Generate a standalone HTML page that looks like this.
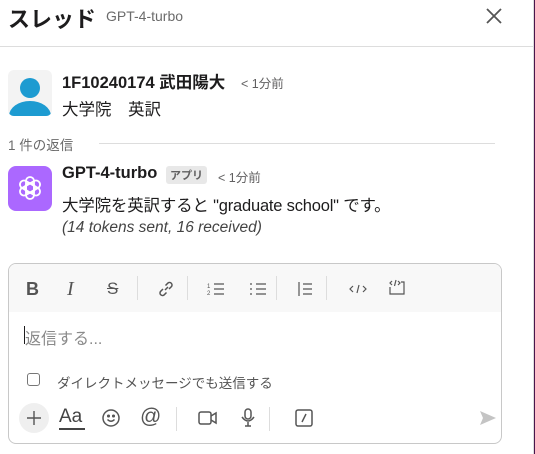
<!DOCTYPE html><html><head><meta charset="utf-8"><style>
*{margin:0;padding:0;box-sizing:border-box}
body{width:535px;height:454px;background:#fff;font-family:"Liberation Sans","Noto Sans CJK JP",sans-serif;color:#1d1c1d;position:relative;overflow:hidden}
.a{position:absolute;white-space:nowrap}
.ic{position:absolute;stroke:#555;fill:none;stroke-width:1.5}
</style></head><body>
<div class="a" style="left:8px;top:2px;font-size:22px;font-weight:bold">スレッド</div>
<div class="a" style="left:106px;top:8px;font-size:14px;color:#6b6b6b">GPT-4-turbo</div>
<svg class="ic" style="left:484px;top:6px" width="20" height="20"><path d="M3 3L17 17M17 3L3 17" stroke="#555" stroke-width="1.8"/></svg>
<div class="a" style="left:0;top:46px;width:533px;height:1px;background:#ddd"></div>
<div class="a" style="left:533px;top:0;width:1px;height:454px;background:#ddd"></div>
<div class="a" style="left:534px;top:0;width:1px;height:454px;background:#4a154b"></div>

<div class="a" style="left:8px;top:70px;width:44px;height:46px;border-radius:6px;background:#f3f3f3;overflow:hidden">
<div class="a" style="left:12px;top:8px;width:20px;height:20px;border-radius:50%;background:#1d9bd1"></div>
<div class="a" style="left:1px;top:31px;width:42px;height:30px;border-radius:50% 50% 0 0;background:#1d9bd1"></div></div>
<div class="a" style="left:62px;top:69px;font-size:16.5px;font-weight:bold">1F10240174 武田陽大</div>
<div class="a" style="left:241px;top:73px;font-size:12.5px;color:#616061">&lt; 1分前</div>
<div class="a" style="left:62px;top:96px;font-size:16.5px">大学院　英訳</div>

<div class="a" style="left:8px;top:134px;font-size:13.5px;color:#6b6b6b">1 件の返信</div>
<div class="a" style="left:99px;top:143px;width:396px;height:1px;background:#ddd"></div>

<div class="a" style="left:8px;top:166px;width:44px;height:45px;border-radius:8px;background:#ab68ff"></div>
<svg class="a" style="left:14px;top:172px" width="32" height="32" viewBox="0 0 32 32" fill="none" stroke="#fff" stroke-width="1.8"><g transform="translate(16 16)"><rect x="-4" y="-11" width="8" height="16" rx="4" transform="rotate(0)"/><rect x="-4" y="-11" width="8" height="16" rx="4" transform="rotate(60)"/><rect x="-4" y="-11" width="8" height="16" rx="4" transform="rotate(120)"/><rect x="-4" y="-11" width="8" height="16" rx="4" transform="rotate(180)"/><rect x="-4" y="-11" width="8" height="16" rx="4" transform="rotate(240)"/><rect x="-4" y="-11" width="8" height="16" rx="4" transform="rotate(300)"/></g></svg>
<div class="a" style="left:62px;top:164px;font-size:16.5px;font-weight:bold">GPT-4-turbo</div>
<div class="a" style="left:166px;top:166px;font-size:11px;color:#616061;background:#e8e8e8;padding:1px 4px;border-radius:3px;font-weight:bold">アプリ</div>
<div class="a" style="left:218px;top:167px;font-size:12.5px;color:#616061">&lt; 1分前</div>
<div class="a" style="left:62px;top:192px;font-size:16.5px;letter-spacing:-0.2px">大学院を英訳すると "graduate school" です。</div>
<div class="a" style="left:62px;top:219px;font-size:15.5px;font-style:italic;color:#444">(14 tokens sent, 16 received)</div>

<div class="a" style="left:8px;top:263px;width:494px;height:181px;border:1px solid #c8c8c8;border-radius:8px;overflow:hidden">
<div class="a" style="left:0;top:0;width:494px;height:48px;background:#f8f8f8"></div>
<div class="a" style="left:17px;top:15px;font-size:18px;font-weight:bold;color:#555">B</div>
<div class="a" style="left:58px;top:14px;font-size:20px;font-style:italic;font-family:'Liberation Serif',serif;color:#555">I</div>
<div class="a" style="left:98px;top:15px;font-size:17px;color:#555;text-decoration:line-through">S</div>
<div class="a" style="left:128px;top:12px;width:1px;height:24px;background:#ddd"></div>
<svg class="ic" style="left:148px;top:16px" width="18" height="18"><path d="M8 10l3-3M6 9L3.5 11.5a2.5 2.5 0 0 0 3.5 3.5L9.5 12.5M12 9l2.5-2.5a2.5 2.5 0 0 0-3.5-3.5L8.5 5.5"/></svg>
<div class="a" style="left:178px;top:12px;width:1px;height:24px;background:#ddd"></div>
<svg class="ic" style="left:198px;top:17px" width="18" height="16"><path d="M7 3h10M7 8h10M7 13h10" stroke-width="1.2"/><text x="0" y="7" font-size="6" fill="#555" stroke="none">1</text><text x="0" y="14" font-size="6" fill="#555" stroke="none">2</text></svg>
<svg class="ic" style="left:240px;top:17px" width="18" height="16"><path d="M7 3h10M7 8h10M7 13h10M1 3h2M1 8h2M1 13h2" stroke-width="1.2"/></svg>
<div class="a" style="left:267px;top:12px;width:1px;height:24px;background:#ddd"></div>
<svg class="ic" style="left:288px;top:17px" width="18" height="16"><path d="M2 1v14M6 3h9M6 8h9M6 13h9" stroke-width="1.2"/></svg>
<div class="a" style="left:317px;top:12px;width:1px;height:24px;background:#ddd"></div>
<svg class="ic" style="left:339px;top:18px" width="20" height="14"><path d="M5 4L2 7l3 3M15 4l3 3-3 3M11 3L9 11" stroke-width="1.2"/></svg>
<svg class="ic" style="left:378px;top:15px" width="20" height="18"><path d="M3 8v7h14V3h-3M5 2L3 4l2 2M11 2l2 2-2 2M9 1L7.5 7" stroke-width="1.2"/></svg>
<div class="a" style="left:15px;top:62px;width:1px;height:18px;background:#1d1c1d"></div>
<div class="a" style="left:16px;top:61px;font-size:16px;color:#8a8a8a">返信する...</div>
<div class="a" style="left:18px;top:109px;width:13px;height:13px;border:1px solid #777;border-radius:3px"></div>
<div class="a" style="left:48px;top:108px;font-size:13.5px;color:#555">ダイレクトメッセージでも送信する</div>
<div class="a" style="left:10px;top:139px;width:30px;height:30px;border-radius:50%;background:#efefef"></div>
<svg class="ic" style="left:17px;top:146px" width="16" height="16"><path d="M8 1v14M1 8h14" stroke-width="1.4"/></svg>
<div class="a" style="left:50px;top:143px;font-size:19px;color:#444;line-height:20px">Aa</div>
<div class="a" style="left:50px;top:164px;width:26px;height:2px;background:#444"></div>
<svg class="ic" style="left:92px;top:144px" width="20" height="20"><circle cx="10" cy="10" r="8"/><circle cx="7.5" cy="8" r=".8" fill="#555"/><circle cx="12.5" cy="8" r=".8" fill="#555"/><path d="M6.5 11.5q3.5 3.5 7 0"/></svg>
<div class="a" style="left:131px;top:141px;font-size:21px;color:#555;line-height:24px">@</div>
<div class="a" style="left:167px;top:143px;width:1px;height:24px;background:#ddd"></div>
<svg class="ic" style="left:188px;top:145px" width="22" height="18"><rect x="2" y="3" width="12" height="12" rx="2"/><path d="M14 7l5-3v10l-5-3"/></svg>
<svg class="ic" style="left:230px;top:143px" width="18" height="22"><rect x="6" y="2" width="6" height="10" rx="3"/><path d="M3 10q6 8 12 0M9 15v4M6 19h6"/></svg>
<div class="a" style="left:260px;top:143px;width:1px;height:24px;background:#ddd"></div>
<svg class="ic" style="left:285px;top:144px" width="20" height="20"><rect x="2" y="2" width="16" height="16" rx="2"/><path d="M12 6l-4 8"/></svg>
<svg class="a" style="left:470px;top:146px" width="18" height="16"><path d="M1 1l16 7-16 7 3-7z" fill="#c4c4c4"/></svg>
</div>
</body></html>
